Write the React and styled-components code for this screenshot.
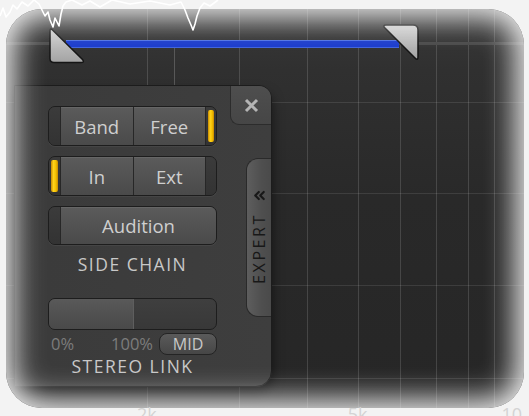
import React from "react";
import styled, { createGlobalStyle } from "styled-components";
import { ChevronsLeft } from "lucide-react";

const GlobalStyle = createGlobalStyle`
  body {
    margin: 0;
    background: #f3f3f3;
    font-family: "Open Sans", "DejaVu Sans", sans-serif;
  }
`;

const Stage = styled.div`
  position: relative;
  width: 529px;
  height: 416px;
  overflow: hidden;
  display: flex;
  flex-direction: column;
  background: linear-gradient(#3a3a3a 0, #303030 70px, #292929 200px, #262626);

  & > * {
    flex: none;
  }
`;

const Chart = styled.svg`
  position: absolute;
  inset: 0;
  z-index: 0;
`;

const Wave = styled.svg`
  position: absolute;
  top: 0;
  left: 0;
  z-index: 4;
  pointer-events: none;
`;

const Vignette = styled.div`
  position: absolute;
  top: 9px;
  left: 6px;
  right: 5px;
  bottom: 8px;
  z-index: 3;
  pointer-events: none;
  border-radius: 36px;
  box-shadow: 0 0 0 80px #f3f3f3, inset 0 0 30px 8px #f3f3f3;
`;

const SliderArea = styled.div`
  position: relative;
  z-index: 1;
  height: 85px;
  box-sizing: border-box;
  padding: 25px 0 0 48px;
  display: flex;
  align-items: flex-start;
`;

const Handle = styled.svg`
  flex: none;
  position: relative;
  z-index: 2;
  margin-top: ${({ $top }) => $top}px;
`;

const RangeBar = styled.div`
  flex: none;
  width: 333px;
  height: 6px;
  margin: 15px -18px 0 -20px;
  background: #1b3ccc;
  border-top: 1px solid #5072e4;
  border-bottom: 1px solid #4164dc;
`;

const PanelRow = styled.div`
  position: relative;
  z-index: 1;
  display: flex;
  padding-left: 14px;
`;

const Panel = styled.div`
  width: 258px;
  height: 302px;
  box-sizing: border-box;
  display: flex;
  background: linear-gradient(90deg, #303030 0, #3b3b3b 30px, #3e3e3e);
  border: 1px solid #1c1c1c;
  border-radius: 0 13px 16px 0;
  box-shadow: 0 8px 12px rgba(0, 0, 0, 0.55);
`;

const Main = styled.div`
  width: 215px;
  box-sizing: border-box;
  padding: 20px 0 0 33px;
  display: flex;
  flex-direction: column;
`;

const Side = styled.div`
  width: 41px;
  display: flex;
  flex-direction: column;
`;

const CloseTab = styled.div`
  height: 38px;
  display: flex;
  align-items: center;
  justify-content: center;
  background: linear-gradient(#4e4e4e, #464646);
  border-left: 1px solid #2c2c2c;
  border-bottom: 1px solid #2c2c2c;
  border-radius: 0 12px 0 9px;
`;

const ExpertTab = styled.div`
  align-self: flex-end;
  width: 25px;
  height: 159px;
  margin-top: 33px;
  box-sizing: border-box;
  padding-top: 28px;
  display: flex;
  flex-direction: column;
  align-items: center;
  background: linear-gradient(90deg, #5e5e5e, #4f4f4f 60%, #4a4a4a);
  border: 1px solid #2a2a2a;
  border-right: none;
  border-radius: 12px 0 0 12px;
  color: #181818;
`;

const ExpertText = styled.span`
  margin-top: 9px;
  writing-mode: vertical-rl;
  transform: rotate(180deg);
  font-size: 16px;
  font-weight: 500;
  letter-spacing: 2.6px;
  line-height: 16px;
`;

const SegGroup = styled.div`
  display: flex;
  width: 169px;
  height: ${({ $h }) => $h || 40}px;
  margin-top: ${({ $gap }) => $gap || 0}px;
  box-sizing: border-box;
  border: 1px solid #1d1d1d;
  border-radius: 7px;
  overflow: hidden;
  background: #333;
  box-shadow: 0 1px 0 rgba(255, 255, 255, 0.05);

  & > * + * {
    border-left: 1px solid #272727;
  }
`;

const Lamp = styled.div`
  flex: none;
  width: 11px;
  box-sizing: border-box;
  padding: 3px 2px;
  display: flex;
  background: linear-gradient(#3b3b3b, #333);

  &::after {
    content: "";
    flex: 1;
    border-radius: 2px;
    background: ${({ $on }) =>
      $on
        ? "linear-gradient(90deg, #c78800, #ffd31c 35%, #f3bf00 70%, #c78800)"
        : "transparent"};
  }
`;

const SegButton = styled.div`
  flex: 1;
  display: flex;
  align-items: center;
  justify-content: center;
  background: linear-gradient(#5b5b5b, #4a4a4a);
  box-shadow: inset 0 1px 0 rgba(255, 255, 255, 0.07);
  color: #cfcfcf;
  font-size: 18.5px;
  font-weight: 500;
`;

const Caption = styled.div`
  width: 169px;
  margin-top: ${({ $gap }) => $gap}px;
  text-align: center;
  font-size: 17.5px;
  font-weight: 500;
  line-height: 20px;
  letter-spacing: 1.5px;
  color: #c8c8c8;
`;

const LinkSlider = styled.div`
  display: flex;
  width: 169px;
  height: 32px;
  margin-top: 24px;
  box-sizing: border-box;
  border: 1px solid #1d1d1d;
  border-radius: 7px;
  overflow: hidden;
  background: linear-gradient(#3f3f3f, #383838);
`;

const LinkFill = styled.div`
  background: linear-gradient(#595959, #494949);
  border-right: 1px solid #5e5e5e;
`;

const LinkRow = styled.div`
  display: flex;
  align-items: center;
  width: 169px;
  height: 22px;
  margin-top: 3px;
`;

const Pct = styled.span`
  font-size: 16.5px;
  font-weight: 500;
  line-height: 20px;
  color: #7c7c7c;
  padding-left: ${({ $pad }) => $pad || 0}px;
  margin-left: ${({ $auto }) => ($auto ? "auto" : "0")};
`;

const MidButton = styled.div`
  width: 58px;
  height: 22px;
  margin-left: 6px;
  box-sizing: border-box;
  display: flex;
  align-items: center;
  justify-content: center;
  border: 1px solid #242424;
  border-radius: 8px;
  background: linear-gradient(#5a5a5a, #464646);
  color: #c8c8c8;
  font-size: 16px;
  font-weight: 500;
  line-height: 20px;
`;

const FreqRow = styled.div`
  position: relative;
  z-index: 4;
  display: flex;
  margin-top: 17px;
  padding-left: 137px;
`;

const Freq = styled.span`
  margin-left: ${({ $gap }) => $gap || 0}px;
  font-size: 18px;
  line-height: 20px;
  color: #d4d4d4;
`;

const gridX = [147, 239, 307, 358, 400, 436, 468, 494];
const gridY = [102, 193, 285, 378];

function Graph() {
  return (
    <Chart width="529" height="416" viewBox="0 0 529 416">
      {gridX.map((x) => (
        <line key={x} x1={x + 0.5} y1="0" x2={x + 0.5} y2="416" stroke="rgba(255,255,255,0.14)" />
      ))}
      {gridY.map((y) => (
        <line key={y} x1="0" y1={y + 0.5} x2="529" y2={y + 0.5} stroke="rgba(255,255,255,0.1)" />
      ))}
      <line x1="174.5" y1="46" x2="174.5" y2="110" stroke="#585858" />
      <line x1="0" y1="43.5" x2="529" y2="43.5" stroke="#4a4a4a" strokeWidth="3" />
    </Chart>
  );
}

function Waveform() {
  return (
    <Wave width="240" height="36" viewBox="0 0 240 36">
      <polyline
        fill="none"
        stroke="#ffffff"
        strokeWidth="1.6"
        strokeLinejoin="round"
        points="0,16 3,8 6,17 10,12 13,5 17,9 22,2 28,6 34,0 39,4 42,10 45,16 48,12 50,20 53,27 55,18 57,22 59,26 61,14 63,6 66,2 72,0 82,5 90,1 100,7 112,0 130,4 150,1 170,5 181,2 185,10 188,18 191,25 193,30 195,24 197,16 200,8 204,3 210,6 218,0"
      />
    </Wave>
  );
}

function HandleFill({ id }) {
  return (
    <defs>
      <linearGradient id={id} x1="0" y1="0" x2="0" y2="1">
        <stop offset="0" stopColor="#d2d2d2" />
        <stop offset="1" stopColor="#a3a3a3" />
      </linearGradient>
    </defs>
  );
}

export default function App() {
  return (
    <>
      <GlobalStyle />
      <Stage>
        <Graph />
        <SliderArea>
          <Handle $top={2} width="38" height="37" viewBox="0 0 38 37">
            <HandleFill id="hl" />
            <path
              d="M2 4 Q2 0.5 4.5 3 L34.5 32.5 Q37 35.5 33 35.5 L6 35.5 Q2 35.5 2 31.5 Z"
              fill="url(#hl)"
              stroke="#151515"
              strokeWidth="1.5"
            />
          </Handle>
          <RangeBar />
          <Handle $top={-1} width="39" height="38" viewBox="0 0 39 38">
            <HandleFill id="hr" />
            <path
              d="M5 1 L32 1 Q37 1 37 6 L37 33 Q37 37 34 34 L3.5 3.5 Q1.5 1 5 1 Z"
              fill="url(#hr)"
              stroke="#151515"
              strokeWidth="1.5"
            />
          </Handle>
        </SliderArea>

        <PanelRow>
          <Panel>
            <Main>
              <SegGroup>
                <Lamp />
                <SegButton>Band</SegButton>
                <SegButton>Free</SegButton>
                <Lamp $on />
              </SegGroup>
              <SegGroup $gap={10}>
                <Lamp $on />
                <SegButton>In</SegButton>
                <SegButton>Ext</SegButton>
                <Lamp />
              </SegGroup>
              <SegGroup $gap={10} $h={39}>
                <Lamp />
                <SegButton>Audition</SegButton>
              </SegGroup>
              <Caption $gap={9}>SIDE CHAIN</Caption>

              <LinkSlider>
                <LinkFill style={{ width: "50%" }} />
              </LinkSlider>
              <LinkRow>
                <Pct $pad={3}>0%</Pct>
                <Pct $auto>100%</Pct>
                <MidButton>MID</MidButton>
              </LinkRow>
              <Caption $gap={1}>STEREO LINK</Caption>
            </Main>
            <Side>
              <CloseTab>
                <svg width="15" height="15" viewBox="0 0 15 15">
                  <path d="M2 2 L13 13 M13 2 L2 13" stroke="#b4b4b4" strokeWidth="3" />
                </svg>
              </CloseTab>
              <ExpertTab>
                <ChevronsLeft size={17} strokeWidth={3} />
                <ExpertText>EXPERT</ExpertText>
              </ExpertTab>
            </Side>
          </Panel>
        </PanelRow>

        <FreqRow>
          <Freq>2k</Freq>
          <Freq $gap={191}>5k</Freq>
          <Freq $gap={134}>10</Freq>
        </FreqRow>
        <Vignette />
        <Waveform />
      </Stage>
    </>
  );
}
